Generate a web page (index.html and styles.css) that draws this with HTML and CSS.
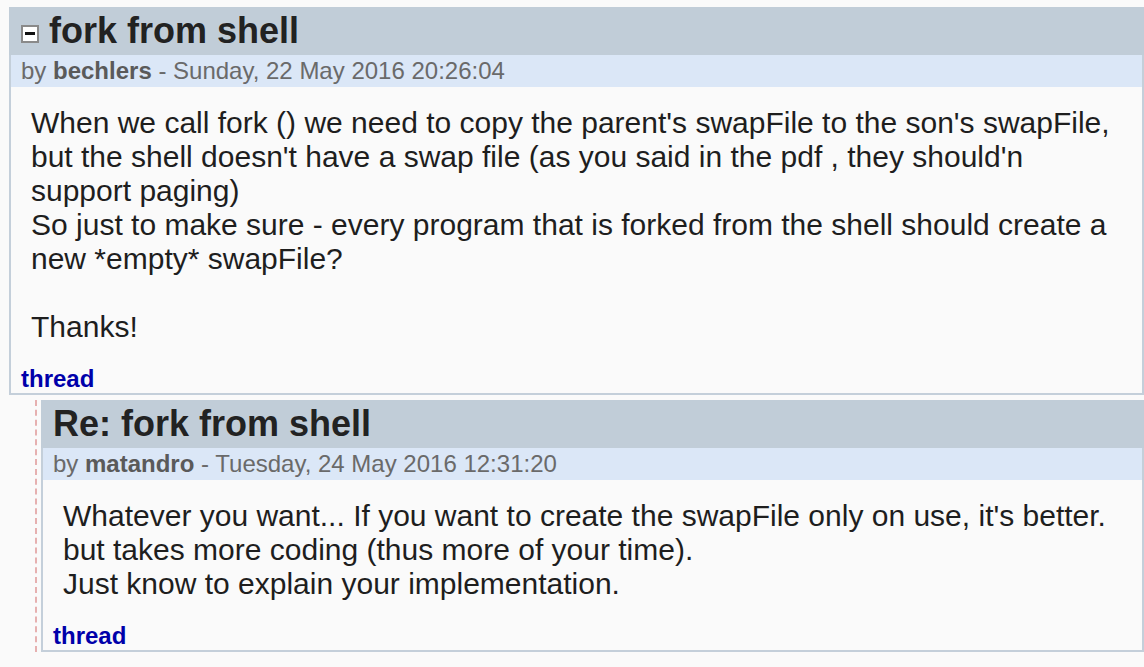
FILE: index.html
```html
<!DOCTYPE html>
<html lang="en">
<head>
<meta charset="UTF-8">
<title>fork from shell</title>
<link rel="stylesheet" href="styles.css">
</head>
<body>

<div class="discussion">
    <div class="post">
        <div class="subject">
            <span class="toggle"></span>
            fork from shell
        </div>
        <div class="author">by <b>bechlers</b> - Sunday, 22 May 2016 20:26:04</div>
        <div class="content">
            When we call fork () we need to copy the parent's swapFile to the son's swapFile,<br>
            but the shell doesn't have a swap file (as you said in the pdf , they should'n<br>
            support paging)<br>
            So just to make sure - every program that is forked from the shell should create a<br>
            new *empty* swapFile?<br>
            <br>
            Thanks!
        </div>
        <div class="commands"><a href="#">thread</a></div>
    </div>

    <div class="indent">
        <div class="post">
            <div class="subject">Re: fork from shell</div>
            <div class="author">by <b>matandro</b> - Tuesday, 24 May 2016 12:31:20</div>
            <div class="content">
                Whatever you want... If you want to create the swapFile only on use, it's better.<br>
                but takes more coding (thus more of your time).<br>
                Just know to explain your implementation.
            </div>
            <div class="commands"><a href="#">thread</a></div>
        </div>
    </div>
</div>

</body>
</html>
```

FILE: styles.css
```css
body {
    font-family: "Liberation Sans", Arial, sans-serif;
    background-color: #fafafa;
    color: #222;
    margin: 0;
    padding: 0;
}
.discussion {
    padding: 7px 0 0 9px;
}
.post {
    border: 2px solid #c4cfda;
    background-color: #fafafa;
}
.subject {
    background-color: #c1cdd8;
    margin: -2px -2px 0;
    padding: 0 10px 0 12px;
    height: 48px;
    line-height: 50px;
    font-size: 36px;
    font-weight: bold;
    color: #222;
    display: flex;
    align-items: center;
    gap: 10px;
}
.toggle {
    display: inline-block;
    box-sizing: border-box;
    width: 18px;
    height: 18px;
    border: 2px solid #8a8a8a;
    background-color: #fff;
    position: relative;
    margin-top: 6px;
}
.toggle::after {
    content: "";
    position: absolute;
    left: 2px;
    right: 2px;
    top: 5px;
    height: 3px;
    background-color: #111;
}
.author {
    background-color: #dbe7f7;
    height: 32px;
    line-height: 32px;
    font-size: 24px;
    color: #6a6a6a;
    padding: 0 10px;
}
.author b {
    color: #5a5a5a;
}
.content {
    font-size: 30px;
    line-height: 34px;
    color: #1e1e1e;
    padding: 19px 20px 0 20px;
}
.commands {
    font-size: 24px;
    font-weight: bold;
    line-height: 28px;
    padding: 21px 10px 0 10px;
}
.commands a {
    color: #0000aa;
    text-decoration: none;
}
.indent {
    margin: 5px 0 0 26px;
    border-left: 2px dashed #e6b0b0;
    padding-left: 4px;
}
```
